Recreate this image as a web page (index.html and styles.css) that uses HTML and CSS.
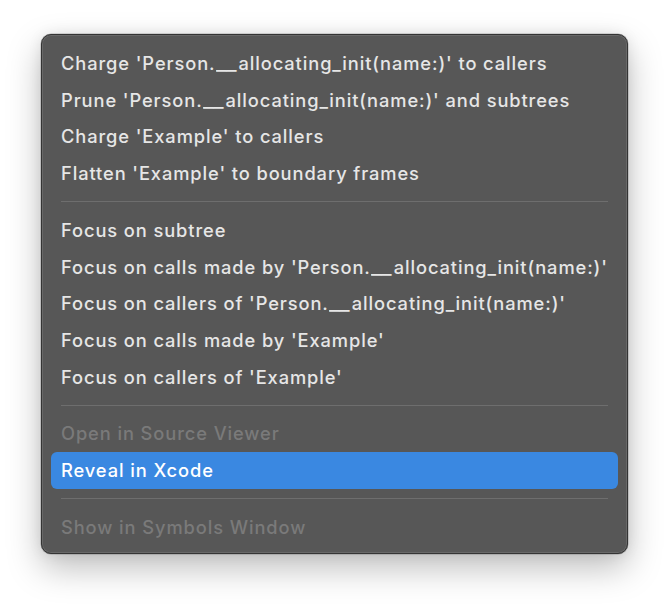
FILE: index.html
```html
<!DOCTYPE html>
<html>
<head>
<meta charset="utf-8">
<link rel="stylesheet" href="styles.css">
</head>
<body>
<div class="menu">
  <div class="item">Charge 'Person.<span class="us">__</span>allocating_init(name:)' to callers</div>
  <div class="item">Prune 'Person.<span class="us">__</span>allocating_init(name:)' and subtrees</div>
  <div class="item">Charge 'Example' to callers</div>
  <div class="item">Flatten 'Example' to boundary frames</div>
  <div class="sep"></div>
  <div class="item">Focus on subtree</div>
  <div class="item">Focus on calls made by 'Person.<span class="us">__</span>allocating_init(name:)'</div>
  <div class="item">Focus on callers of 'Person.<span class="us">__</span>allocating_init(name:)'</div>
  <div class="item">Focus on calls made by 'Example'</div>
  <div class="item">Focus on callers of 'Example'</div>
  <div class="sep"></div>
  <div class="item disabled">Open in Source Viewer</div>
  <div class="item active">Reveal in Xcode</div>
  <div class="sep"></div>
  <div class="item disabled">Show in Symbols Window</div>
</div>
</body>
</html>
```
FILE: styles.css
```css
html, body {
  margin: 0;
  background: #ffffff;
}
body {
  box-sizing: border-box;
  min-height: 604px;
  padding: 34px 0 0 41px;
  font-family: Inter, "Noto Sans", sans-serif;
}
.menu {
  box-sizing: border-box;
  width: 587px;
  height: 520px;
  background: #575757;
  border: 1px solid #343434;
  border-radius: 10px;
  padding: 10px 9px 0 9px;
  box-shadow: inset 0 0 0 1px rgba(255,255,255,0.10), 0 14px 34px rgba(0,0,0,0.26), 0 0 14px rgba(0,0,0,0.08), 0 0 0 0.5px rgba(0,0,0,0.25);
  display: flex;
  flex-direction: column;
}
.item {
  height: 36.7px;
  line-height: 36.7px;
  padding: 0 10px;
  font-size: 18.3px;
  font-weight: 500;
  letter-spacing: 0.9px;
  color: #e6e6e6;
  border-radius: 6px;
  white-space: nowrap;
  flex: none;
}
.us {
  display: inline-block;
  letter-spacing: -0.5px;
  transform: scaleX(1.25);
  transform-origin: 0 0;
  margin-right: 7px;
}
.item.disabled {
  color: #7a7a7a;
}
.item.active {
  background: #3a88e1;
  color: #ffffff;
}
.sep {
  flex: none;
  height: 1px;
  margin: 9.5px 10px 9.6px 10px;
  background: #6e6e6e;
}
```
